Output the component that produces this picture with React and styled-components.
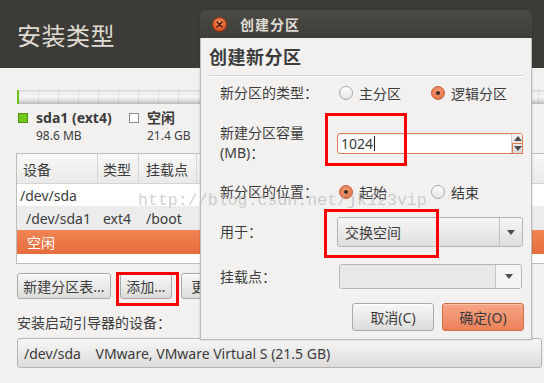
import React from 'react';
import styled, { createGlobalStyle } from 'styled-components';

const GlobalStyle = createGlobalStyle`
  html, body {
    margin: 0;
    padding: 0;
    background: #f2f1f0;
    overflow: hidden;
  }
  * { box-sizing: border-box; }
`;

const FONT = `'Noto Sans', 'Noto Sans CJK SC', sans-serif`;

const Screen = styled.div`
  position: relative;
  width: 544px;
  height: 383px;
  overflow: hidden;
  background: #f2f1f0;
  font-family: ${FONT};
  font-size: 14px;
  color: #3c3c3c;
`;

/* ---------- background installer window ---------- */

const Header = styled.div`
  height: 68px;
  background: #3c3b37;
  padding: 21px 0 0 17px;
`;

const PageTitle = styled.h1`
  margin: 0;
  font-size: 24px;
  line-height: 30px;
  font-weight: normal;
  color: #dfdbd2;
  letter-spacing: 0.5px;
`;

const Content = styled.div`
  padding-left: 17px;
  width: 580px;
`;

const PartitionBar = styled.div`
  margin-top: 22px;
  height: 14px;
  border-left: 2px solid #6fc21a;
  background:
    repeating-linear-gradient(90deg, transparent 0 19px, rgba(0,0,0,0.07) 19px 20px),
    linear-gradient(#cfcfcf 0, #ececec 2px, #f6f6f6 45%, #e4e4e4 70%, #b9b9b9 100%);
`;

const Legend = styled.div`
  margin-top: 6px;
  display: grid;
  grid-template-columns: 111px auto;
`;

const LegendItem = styled.div`
  display: grid;
  grid-template-columns: 19px auto;
  align-items: center;
`;

const Swatch = styled.span`
  width: 10px;
  height: 10px;
  margin-left: 1px;
  background: ${p => p.$color || '#fff'};
  border: 1px solid ${p => (p.$color ? '#4e8f10' : '#8a8a8a')};
`;

const LegendName = styled.span`
  font-weight: bold;
  line-height: 16px;
`;

const LegendSize = styled.span`
  grid-column: 2;
  font-size: 12px;
  line-height: 17px;
  margin-top: 1px;
`;

const Table = styled.div`
  margin-top: 9px;
  margin-left: -1px;
  border: 1px solid #bdbdbd;
  background: #fff;
`;

const TableRow = styled.div`
  display: grid;
  grid-template-columns: 81px 41px 58px 1fr;
  align-items: center;
  height: ${p => p.$h}px;
  background: ${p =>
    p.$selected
      ? 'linear-gradient(#f18553, #e66d3c)'
      : p.$alt
      ? '#ececec'
      : '#fff'};
  color: ${p => (p.$selected ? '#fff' : '#3c3c3c')};
`;

const HeadRow = styled(TableRow)`
  background: linear-gradient(#f7f7f6, #ebeae9);
  border-bottom: 1px solid #d4d4d4;
`;

const HeadCell = styled.span`
  height: 100%;
  display: flex;
  align-items: center;
  padding-left: ${p => p.$pl || 6}px;
  border-right: 1px solid #d6d6d6;
`;

const Cell = styled.span`
  padding-left: ${p => p.$pl || 4}px;
  white-space: nowrap;
`;

const ButtonRow = styled.div`
  margin-top: 9px;
  display: flex;
  gap: 9px;
`;

const Button = styled.button`
  height: ${p => p.$h || 26}px;
  width: ${p => p.$w}px;
  padding: 0;
  font-family: ${FONT};
  font-size: 14px;
  color: #3c3c3c;
  border: 1px solid #a9a9a9;
  border-radius: 3px;
  background: linear-gradient(#f8f8f8, #dcdcdb);
  box-shadow: inset 0 1px 0 #fff;
  flex-shrink: 0;
`;

const PrimaryButton = styled(Button)`
  border-color: #cf6d44;
  background: linear-gradient(#f6a586, #ec8059);
  box-shadow: inset 0 1px 0 #f9c0a8;
`;

const FieldLabel = styled.div`
  margin-top: 15px;
  line-height: 18px;
`;

const DeviceCombo = styled.div`
  margin-top: 6px;
  width: 525px;
  height: 30px;
  display: flex;
  align-items: center;
  padding-left: 6px;
  border: 1px solid #b4b4b4;
  border-radius: 3px;
  background: linear-gradient(#f6f6f6, #dedddc);
  white-space: pre;
`;

/* ---------- dialog ---------- */

const Dialog = styled.div`
  position: absolute;
  left: 200px;
  top: 10px;
  width: 332px;
  box-shadow: 0 0 2px rgba(0,0,0,0.25);
  border-radius: 6px 6px 0 0;
`;

const TitleBar = styled.div`
  height: 28px;
  display: flex;
  align-items: center;
  padding-left: 12px;
  border-radius: 6px 6px 0 0;
  background: linear-gradient(#4b4a45, #3e3d39);
`;

const TitleText = styled.span`
  margin-left: 13px;
  color: #dfdbd2;
  font-weight: bold;
  font-size: 14px;
  letter-spacing: 1px;
`;

const DialogBody = styled.div`
  height: 302px;
  padding: 8px 7px 0 8px;
  background: #f2f1f0;
  border: 1px solid #bcbcbc;
  border-top: none;
`;

const DialogHeading = styled.h2`
  margin: 0 0 0 0;
  font-size: 18px;
  line-height: 22px;
  font-weight: bold;
  color: #3c3c3c;
  letter-spacing: 0.5px;
`;

const Separator = styled.div`
  margin-top: 7px;
  height: 1px;
  background: #d7d6d4;
  box-shadow: 0 1px 0 #fff;
`;

const FormRow = styled.div`
  display: grid;
  grid-template-columns: 117px 1fr;
  align-items: center;
  padding-left: 11px;
  height: ${p => p.$h}px;
  margin-top: ${p => p.$mt}px;
`;

const RowLabel = styled.span`
  line-height: 20px;
`;

const RadioGroup = styled.div`
  display: grid;
  grid-template-columns: 92px auto;
  padding-left: 2px;
`;

const RadioOption = styled.label`
  display: flex;
  align-items: center;
  gap: 6px;
`;

const RadioDot = styled.span`
  position: relative;
  width: 14px;
  height: 14px;
  border-radius: 50%;
  border: 1px solid ${p => (p.$on ? '#c2603a' : '#a6a6a6')};
  background: ${p =>
    p.$on
      ? 'radial-gradient(circle at 50% 35%, #f59b74, #e16c3e)'
      : 'linear-gradient(#fff, #e4e4e4)'};
  &::after {
    content: '';
    display: ${p => (p.$on ? 'block' : 'none')};
    position: absolute;
    left: 4px;
    top: 4px;
    width: 4px;
    height: 4px;
    border-radius: 50%;
    background: #3a2a22;
  }
`;

const SpinEntry = styled.div`
  width: 186px;
  height: 21px;
  display: flex;
  border: 1px solid #e07a4f;
  border-radius: 3px;
  background: #fff;
  box-shadow: inset 0 1px 1px rgba(0,0,0,0.08);
`;

const EntryText = styled.div`
  flex: 1;
  display: flex;
  align-items: center;
  padding-left: 3px;
`;

const Caret = styled.span`
  width: 1px;
  height: 15px;
  margin-left: 1px;
  background: #222;
`;

const Spin = styled.div`
  width: 11px;
  display: flex;
  flex-direction: column;
  background: linear-gradient(#f2f2f2, #dcdcdc);
  border-left: 1px solid #d0d0d0;
`;

const SpinHalf = styled.div`
  flex: 1;
  display: flex;
  align-items: center;
  justify-content: center;
  border: ${p => (p.$active ? '1px solid #e07a4f' : 'none')};
  margin-right: -1px;
  margin-bottom: ${p => (p.$active ? '-1px' : '0')};
`;

const Tri = styled.span`
  width: 0;
  height: 0;
  border-left: 4px solid transparent;
  border-right: 4px solid transparent;
  ${p => (p.$up ? 'border-bottom' : 'border-top')}: 5px solid #4c4c4c;
`;

const Combo = styled.div`
  width: ${p => p.$w}px;
  height: ${p => p.$h}px;
  margin-left: ${p => p.$ml || 0}px;
  display: flex;
  border: 1px solid #b6b6b6;
  border-radius: 3px;
  background: linear-gradient(#f6f6f6, #dfdedd);
  overflow: hidden;
`;

const ComboText = styled.div`
  flex: 1;
  display: flex;
  align-items: center;
  padding-left: 7px;
  background: ${p => (p.$disabled ? '#e8e8e7' : 'transparent')};
`;

const ComboArrow = styled.div`
  width: ${p => p.$w}px;
  display: flex;
  align-items: center;
  justify-content: center;
  border-left: 1px solid #c4c4c4;
  background: ${p => (p.$light ? '#f4f4f3' : 'transparent')};
`;

const DialogButtons = styled.div`
  margin-top: 14px;
  display: flex;
  justify-content: flex-end;
  gap: 8px;
`;

/* ---------- overlays ---------- */

const Highlight = styled.div`
  position: absolute;
  left: ${p => p.$x}px;
  top: ${p => p.$y}px;
  width: ${p => p.$w}px;
  height: ${p => p.$h}px;
  border: 3px solid #ff0000;
  pointer-events: none;
`;

const Watermark = styled.div`
  position: absolute;
  left: 138px;
  top: 191px;
  font-family: 'Liberation Mono', monospace;
  font-size: 16.6px;
  line-height: 20px;
  color: rgba(170, 170, 170, 0.55);
  pointer-events: none;
  white-space: nowrap;
`;

const CloseIcon = () => (
  <svg width="15" height="15" viewBox="0 0 15 15">
    <defs>
      <radialGradient id="cg" cx="50%" cy="35%" r="65%">
        <stop offset="0" stopColor="#f7905f" />
        <stop offset="1" stopColor="#d7481a" />
      </radialGradient>
    </defs>
    <circle cx="7.5" cy="7.5" r="7" fill="url(#cg)" stroke="#8a2e10" strokeWidth="0.8" />
    <path d="M5 5 L10 10 M10 5 L5 10" stroke="#3b1a0c" strokeWidth="1.4" strokeLinecap="round" />
  </svg>
);

const Radio = ({ on, children }) => (
  <RadioOption>
    <RadioDot $on={on} />
    <span>{children}</span>
  </RadioOption>
);

export default function App() {
  return (
    <>
      <GlobalStyle />
      <Screen>
        <Header>
          <PageTitle>安装类型</PageTitle>
        </Header>
        <Content>
          <PartitionBar />
          <Legend>
            <LegendItem>
              <Swatch $color="#73c81e" />
              <LegendName>sda1 (ext4)</LegendName>
              <LegendSize>98.6 MB</LegendSize>
            </LegendItem>
            <LegendItem>
              <Swatch />
              <LegendName>空闲</LegendName>
              <LegendSize>21.4 GB</LegendSize>
            </LegendItem>
          </Legend>

          <Table>
            <HeadRow $h={30}>
              <HeadCell>设备</HeadCell>
              <HeadCell $pl={5}>类型</HeadCell>
              <HeadCell $pl={7}>挂载点</HeadCell>
              <HeadCell />
            </HeadRow>
            <TableRow $h={22}>
              <Cell $pl={3}>/dev/sda</Cell>
            </TableRow>
            <TableRow $h={24} $alt>
              <Cell $pl={9}>/dev/sda1</Cell>
              <Cell $pl={5}>ext4</Cell>
              <Cell $pl={7}>/boot</Cell>
            </TableRow>
            <TableRow $h={24} $selected>
              <Cell $pl={10}>空闲</Cell>
            </TableRow>
            <TableRow $h={9} />
          </Table>

          <ButtonRow>
            <Button $w={94}>新建分区表...</Button>
            <Button $w={52}>添加...</Button>
            <Button $w={60}>更改...</Button>
          </ButtonRow>

          <FieldLabel>安装启动引导器的设备：</FieldLabel>
          <DeviceCombo>/dev/sda    VMware, VMware Virtual S (21.5 GB)</DeviceCombo>
        </Content>

        <Dialog>
          <TitleBar>
            <CloseIcon />
            <TitleText>创建分区</TitleText>
          </TitleBar>
          <DialogBody>
            <DialogHeading>创建新分区</DialogHeading>
            <Separator />

            <FormRow $h={20} $mt={7}>
              <RowLabel>新分区的类型：</RowLabel>
              <RadioGroup>
                <Radio>主分区</Radio>
                <Radio on>逻辑分区</Radio>
              </RadioGroup>
            </FormRow>

            <FormRow $h={40} $mt={20}>
              <RowLabel>
                新建分区容量
                <br />
                (MB)：
              </RowLabel>
              <SpinEntry>
                <EntryText>
                  1024
                  <Caret />
                </EntryText>
                <Spin>
                  <SpinHalf>
                    <Tri $up />
                  </SpinHalf>
                  <SpinHalf $active>
                    <Tri />
                  </SpinHalf>
                </Spin>
              </SpinEntry>
            </FormRow>

            <FormRow $h={20} $mt={19}>
              <RowLabel>新分区的位置：</RowLabel>
              <RadioGroup>
                <Radio on>起始</Radio>
                <Radio>结束</Radio>
              </RadioGroup>
            </FormRow>

            <FormRow $h={30} $mt={15}>
              <RowLabel>用于：</RowLabel>
              <Combo $w={186} $h={30}>
                <ComboText>交换空间</ComboText>
                <ComboArrow $w={23}>
                  <Tri />
                </ComboArrow>
              </Combo>
            </FormRow>

            <FormRow $h={25} $mt={17}>
              <RowLabel>挂载点：</RowLabel>
              <Combo $w={183} $h={25} $ml={2}>
                <ComboText $disabled />
                <ComboArrow $w={26} $light>
                  <Tri />
                </ComboArrow>
              </Combo>
            </FormRow>

            <DialogButtons>
              <Button $w={82} $h={28}>取消(C)</Button>
              <PrimaryButton $w={82} $h={28}>确定(O)</PrimaryButton>
            </DialogButtons>
          </DialogBody>
        </Dialog>

        <Watermark>http://blog.csdn.net/jk123vip</Watermark>

        <Highlight $x={116} $y={272} $w={63} $h={34} />
        <Highlight $x={325} $y={113} $w={82} $h={53} />
        <Highlight $x={324} $y={209} $w={115} $h={49} />
      </Screen>
    </>
  );
}
